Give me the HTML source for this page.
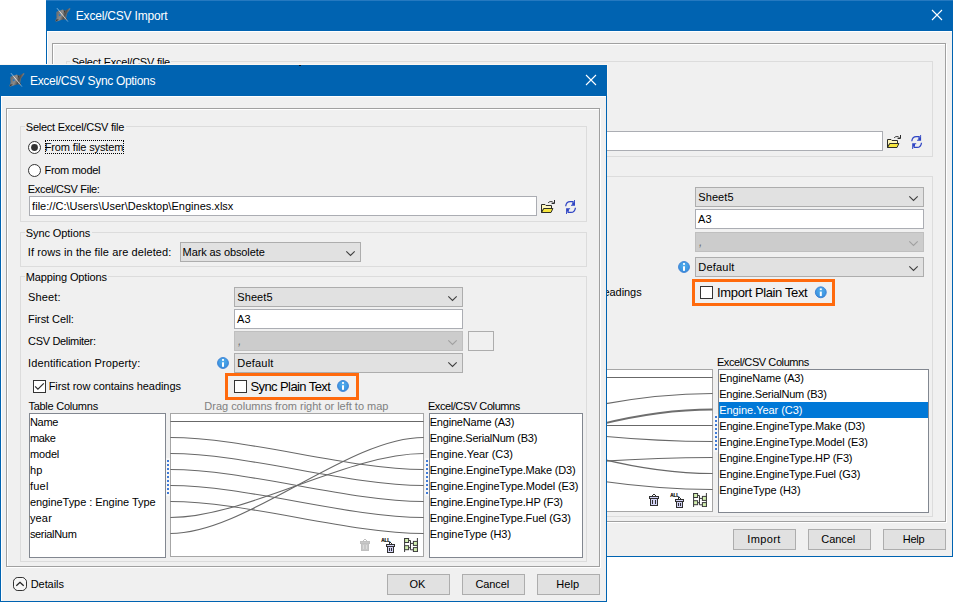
<!DOCTYPE html>
<html lang="en"><head><meta charset="utf-8"><title>Excel/CSV Sync Options</title>
<style>
html,body{margin:0;padding:0}
body{width:953px;height:602px;background:#fff;position:relative;overflow:hidden;font-family:"Liberation Sans", Arial, sans-serif;font-size:11px}
.a{position:absolute;display:block}
.t{white-space:nowrap}
</style></head>
<body>
<div class="a " style="left:46px;top:0px;width:907px;height:557px;background:#f0f0f0;"></div>
<div class="a " style="left:46px;top:0px;width:907px;height:31px;background:#0063B1;"></div>
<div class="a " style="left:46px;top:31px;width:1px;height:526px;background:#0063B1;"></div>
<div class="a " style="left:952px;top:31px;width:1px;height:526px;background:#0063B1;"></div>
<div class="a " style="left:46px;top:556px;width:907px;height:1px;background:#0063B1;"></div>
<div class="a " style="left:47px;top:31px;width:905px;height:1px;background:#fff;"></div>
<div class="a " style="left:47px;top:31px;width:1px;height:525px;background:#fff;"></div>
<svg class="a" style="left:55px;top:8px" width="16" height="15" viewBox="0 0 16 15"><defs><linearGradient id="gm1" x1="0" y1="0" x2="1" y2="0.35"><stop offset="0" stop-color="#b4b4b4"/><stop offset="0.22" stop-color="#6e6e6e"/><stop offset="0.5" stop-color="#8c8c8c"/><stop offset="0.72" stop-color="#4e4e4e"/><stop offset="1" stop-color="#a2a2a2"/></linearGradient><linearGradient id="gs1" x1="0" y1="0" x2="1" y2="1"><stop offset="0" stop-color="#fff" stop-opacity="0.55"/><stop offset="0.5" stop-color="#fff" stop-opacity="1"/><stop offset="1" stop-color="#fff" stop-opacity="0.45"/></linearGradient></defs><path d="M1.6 3.7 L7.6 1.4 L10.2 2.8 L14.6 0.1 L15.5 0.8 L12.2 5.3 L11.2 9.3 L11.9 12 L9.6 11.3 L6.2 12 L0.9 13.7 L0.3 12.6 L1.6 10 L1.3 6.6 Z" fill="url(#gm1)"/><path d="M8.4 1.9 L10.2 2.9 L9.8 5.2 Z M0.5 13.4 L4 11.8 L1.6 11.2 Z M11.3 9.4 L11.9 12 L10.2 11.4 Z" fill="#2e2e2e" opacity="0.85"/><rect x="3.9" y="6.2" width="1.7" height="1.9" fill="#2d78bd"/><path d="M1.9 0.1 L13 13.7" stroke="url(#gs1)" stroke-width="0.8"/></svg>
<div class="a " style="left:46px;top:0px;width:907px;height:1px;background:#2579c0;"></div>
<div class="a t" style="left:75.8px;top:9.34px;font-size:12px;line-height:15px;color:#fff;letter-spacing:-0.194px;">Excel/CSV Import</div>
<svg class="a" style="left:931px;top:9px" width="12" height="12" viewBox="0 0 12 12"><path d="M1 1 L11 11 M11 1 L1 11" stroke="#fff" stroke-width="1.1" fill="none"/></svg>
<div class="a " style="left:53px;top:44px;width:894px;height:479px;border:1px solid #ffffff;box-sizing:border-box;"></div>
<div class="a " style="left:52px;top:43px;width:894px;height:479px;border:1px solid #a0a0a0;box-sizing:border-box;"></div>
<div class="a " style="left:66px;top:61px;width:867px;height:96px;border:1px solid #dcdcdc;box-sizing:border-box;"></div>
<div class="a " style="left:70.4px;top:61px;width:101px;height:1px;background:#f0f0f0;"></div>
<div class="a t" style="left:71.7px;top:55.19px;font-size:11px;line-height:14px;color:#000;letter-spacing:-0.239px;">Select Excel/CSV file</div>
<div class="a " style="left:75px;top:131px;width:808px;height:20px;background:#fff;border:1px solid #abadb3;box-sizing:border-box;"></div>
<svg class="a" style="left:887px;top:135px" width="15" height="13" viewBox="0 0 15 13"><path d="M0.5 12.5 L0.5 4.5 L4 4.5 L5 5.5 L10.5 5.5 L10.5 8.5 L2.8 8.5 Z" fill="#fdf6bd" stroke="#2e2e28" stroke-width="1"/><path d="M0.5 12.5 L2.8 8.5 L11.9 8.5 L10 12.5 Z" fill="#f6e63e" stroke="#2e2e28" stroke-width="1"/><path d="M7.2 2.8 C8.6 1.1 11 1.1 12.7 2.9 M13.5 0 L13.5 3.5 L10.6 3.5" fill="none" stroke="#2a2a2a" stroke-width="1"/></svg>
<svg class="a" style="left:911px;top:135px" width="12" height="14" viewBox="0 0 12 14"><g transform="translate(0.1 0.0)"><path d="M0.7 6.3 C1 3.4 2.6 1.6 5.2 1.6 L8.6 1.6" fill="none" stroke="#2f45c4" stroke-width="1.25"/><path d="M10 0 L10 5.7 L6 5.7 L6 4.7 L7.2 4.7 L7.2 2.3 L9.1 2.3 L9.1 0 Z" fill="#2f45c4"/><g transform="rotate(180 5.55 7)"><path d="M0.7 6.3 C1 3.4 2.6 1.6 5.2 1.6 L8.6 1.6" fill="none" stroke="#2f45c4" stroke-width="1.25"/><path d="M10 0 L10 5.7 L6 5.7 L6 4.7 L7.2 4.7 L7.2 2.3 L9.1 2.3 L9.1 0 Z" fill="#2f45c4"/></g></g></svg>
<div class="a " style="left:66px;top:176px;width:867px;height:341px;border:1px solid #dcdcdc;box-sizing:border-box;"></div>
<div class="a " style="left:70.4px;top:176px;width:84px;height:1px;background:#f0f0f0;"></div>
<div class="a t" style="left:71.7px;top:170.19px;font-size:11px;line-height:14px;color:#000;letter-spacing:-0.125px;">Mapping Options</div>
<div class="a " style="left:695px;top:187px;width:229px;height:20px;background:#e1e1e1;border:1px solid #adadad;box-sizing:border-box;"></div>
<div class="a t" style="left:698.3px;top:190.19px;font-size:11px;line-height:14px;color:#000;letter-spacing:0.071px;">Sheet5</div>
<svg class="a" style="left:908px;top:195px" width="11" height="7" viewBox="0 0 11 7"><g transform="translate(0.5 0.6)"><path d="M0.8 0.7 L5 4.9 L9.2 0.7" fill="none" stroke="#404040" stroke-width="1.1"/></g></svg>
<div class="a " style="left:695px;top:209px;width:229px;height:20px;background:#fff;border:1px solid #abadb3;box-sizing:border-box;"></div>
<div class="a t" style="left:698.1px;top:212.19px;font-size:11px;line-height:14px;color:#000;letter-spacing:0.116px;">A3</div>
<div class="a " style="left:695px;top:232px;width:229px;height:20px;background:#cccccc;border:1px solid #bfbfbf;box-sizing:border-box;"></div>
<div class="a t" style="left:699px;top:234.54px;font-size:12px;line-height:15px;color:#6d6d6d;font-style:italic;">,</div>
<svg class="a" style="left:908px;top:240px" width="11" height="7" viewBox="0 0 11 7"><g transform="translate(0.5 0.6)"><path d="M0.8 0.7 L5 4.9 L9.2 0.7" fill="none" stroke="#a0a0a0" stroke-width="1.1"/></g></svg>
<div class="a " style="left:695px;top:257px;width:229px;height:20px;background:#e1e1e1;border:1px solid #adadad;box-sizing:border-box;"></div>
<div class="a t" style="left:698.3px;top:260.19px;font-size:11px;line-height:14px;color:#000;letter-spacing:0.206px;">Default</div>
<svg class="a" style="left:908px;top:265px" width="11" height="7" viewBox="0 0 11 7"><g transform="translate(0.5 0.6)"><path d="M0.8 0.7 L5 4.9 L9.2 0.7" fill="none" stroke="#404040" stroke-width="1.1"/></g></svg>
<svg class="a" style="left:677px;top:260px" width="14" height="14" viewBox="0 0 14 14"><g transform="translate(0.5 0.5)"><defs><radialGradient id="ig" cx="0.5" cy="0.35" r="0.65"><stop offset="0" stop-color="#52adec"/><stop offset="0.7" stop-color="#3f98e2"/><stop offset="1" stop-color="#3687da"/></radialGradient></defs><circle cx="6.5" cy="6.5" r="5.45" fill="url(#ig)" stroke="#3a7fd2" stroke-width="0.9"/><rect x="5.5" y="2.6" width="2" height="1.7" fill="#fff"/><rect x="5.5" y="5.8" width="2" height="4.5" fill="#fff"/></g></svg>
<div class="a" style="left:692px;top:279px;width:143px;height:27px;border:3px solid #ff6a0d;box-sizing:border-box;background:#f0f0f0"></div>
<div class="a " style="left:700px;top:286px;width:13px;height:13px;background:#fff;border:1px solid #333333;box-sizing:border-box;"></div>
<div class="a t" style="left:717.1px;top:284.50px;font-size:13px;line-height:16px;color:#000;letter-spacing:-0.376px;">Import Plain Text</div>
<svg class="a" style="left:814px;top:285px" width="14" height="14" viewBox="0 0 14 14"><g transform="translate(0.3 0.8)"><defs><radialGradient id="ig" cx="0.5" cy="0.35" r="0.65"><stop offset="0" stop-color="#52adec"/><stop offset="0.7" stop-color="#3f98e2"/><stop offset="1" stop-color="#3687da"/></radialGradient></defs><circle cx="6.5" cy="6.5" r="5.45" fill="url(#ig)" stroke="#3a7fd2" stroke-width="0.9"/><rect x="5.5" y="2.6" width="2" height="1.7" fill="#fff"/><rect x="5.5" y="5.8" width="2" height="4.5" fill="#fff"/></g></svg>
<div class="a t" style="left:509.3px;top:284.79px;font-size:11px;line-height:14px;color:#000;letter-spacing:-0.059px;">First row contains headings</div>
<div class="a t" style="left:716.9px;top:355.19px;font-size:11px;line-height:14px;color:#000;letter-spacing:-0.415px;">Excel/CSV Columns</div>
<div class="a " style="left:340px;top:369px;width:373px;height:143px;background:#fff;border:1px solid #a6a6a6;box-sizing:border-box;"></div>
<svg class="a" style="left:0;top:0" width="953" height="602" viewBox="0 0 953 602"><g fill="none" stroke="#686868" stroke-width="1.15"><path d="M340 377.5 L712.6 377.5"/><path d="M600 404.6 Q660 393.5 712.6 393.5"/><path d="M600 424.4 Q660 409.5 712.6 409.5" stroke="#6e6e6e" stroke-width="2"/><path d="M340 425.5 L712.6 425.5"/><path d="M600 436 Q660 441.5 712.6 441.5"/><path d="M600 461.4 Q660 457.5 712.6 457.5"/><path d="M600 458.6 Q660 473.5 712.6 473.5"/><path d="M600 481 Q660 489.5 712.6 489.5"/></g></svg>
<svg class="a" style="left:649px;top:493px" width="11" height="14" viewBox="0 0 11 14" shape-rendering="crispEdges"><rect x="4" y="1" width="2" height="1" fill="#303030"/><rect x="3" y="2" width="1" height="1" fill="#303030"/><rect x="6" y="2" width="1" height="1" fill="#303030"/><rect x="0" y="3" width="10" height="3" fill="#303030"/><rect x="1" y="4" width="8" height="1" fill="#d2d2f6"/><rect x="1" y="6" width="8" height="7" fill="#303030"/><rect x="2" y="6" width="6" height="6" fill="#d2d2f6"/><rect x="3" y="7" width="1" height="4" fill="#303030"/><rect x="6" y="7" width="1" height="4" fill="#303030"/></svg>
<svg class="a" style="left:669px;top:493px" width="15" height="15" viewBox="0 0 15 15"><text x="1.2" y="3.95" font-family="Liberation Sans, Arial, sans-serif" font-size="5.4" font-weight="bold" fill="#000" stroke="#000" stroke-width="0.2" textLength="9" lengthAdjust="spacingAndGlyphs">ALL</text><g shape-rendering="crispEdges"><rect x="9" y="4" width="1" height="1" fill="#303030"/><rect x="10" y="4" width="1" height="1" fill="#303030"/><rect x="9" y="5" width="1" height="1" fill="#303030"/><rect x="11" y="5" width="1" height="1" fill="#303030"/><rect x="6" y="6" width="9" height="3" fill="#303030"/><rect x="7" y="7" width="7" height="1" fill="#d2d2f6"/><rect x="7" y="9" width="7" height="6" fill="#303030"/><rect x="8" y="9" width="5" height="5" fill="#d2d2f6"/><rect x="9" y="10" width="1" height="3" fill="#303030"/><rect x="11" y="10" width="1" height="3" fill="#303030"/></g></svg>
<svg class="a" style="left:693px;top:493px" width="14" height="14" viewBox="0 0 14 14"><path d="M0.6 0 L0.6 14 M13.4 0 L13.4 14" stroke="#3a3a3a" stroke-width="1"/><path d="M4.5 2.5 L6.5 2.5 M4.5 9.7 L6.5 9.7 M6.5 2.5 L6.5 11.8 M6.5 5.4 L9.5 5.4 M6.5 11.8 L9.5 11.8" fill="none" stroke="#3a3a3a" stroke-width="1"/><rect x="0.6" y="0.5" width="4" height="4" fill="#d3f0b0" stroke="#3a3a3a" stroke-width="1"/><rect x="0.6" y="7.7" width="4" height="4" fill="#d3f0b0" stroke="#3a3a3a" stroke-width="1"/><rect x="9.4" y="3.4" width="4" height="4" fill="#d3f0b0" stroke="#3a3a3a" stroke-width="1"/><rect x="9.4" y="9.6" width="4" height="4" fill="#d3f0b0" stroke="#3a3a3a" stroke-width="1"/></svg>
<div class="a " style="left:714px;top:414px;width:4px;height:38px;background:#f8f8f8;"></div>
<div class="a" style="left:715px;top:416px;width:2px;height:34px;background:repeating-linear-gradient(to bottom,#3f7ad6 0,#3f7ad6 2px,transparent 2px,transparent 4px)"></div>
<div class="a " style="left:718px;top:369px;width:211px;height:144px;background:#fff;border:1px solid #828790;box-sizing:border-box;"></div>
<div class="a " style="left:719px;top:402px;width:209px;height:16px;background:#0078d7;"></div>
<div class="a t" style="left:719.2px;top:371.19px;font-size:11px;line-height:14px;color:#000;letter-spacing:-0.196px;">EngineName (A3)</div>
<div class="a t" style="left:719.2px;top:387.19px;font-size:11px;line-height:14px;color:#000;letter-spacing:-0.243px;">Engine.SerialNum (B3)</div>
<div class="a t" style="left:719.2px;top:403.19px;font-size:11px;line-height:14px;color:#fff;letter-spacing:-0.049px;">Engine.Year (C3)</div>
<div class="a t" style="left:719.2px;top:419.19px;font-size:11px;line-height:14px;color:#000;letter-spacing:-0.145px;">Engine.EngineType.Make (D3)</div>
<div class="a t" style="left:719.2px;top:435.19px;font-size:11px;line-height:14px;color:#000;letter-spacing:-0.131px;">Engine.EngineType.Model (E3)</div>
<div class="a t" style="left:719.2px;top:451.19px;font-size:11px;line-height:14px;color:#000;letter-spacing:-0.143px;">Engine.EngineType.HP (F3)</div>
<div class="a t" style="left:719.2px;top:467.19px;font-size:11px;line-height:14px;color:#000;letter-spacing:-0.142px;">Engine.EngineType.Fuel (G3)</div>
<div class="a t" style="left:719.2px;top:483.19px;font-size:11px;line-height:14px;color:#000;letter-spacing:-0.083px;">EngineType (H3)</div>
<div class="a " style="left:733px;top:529px;width:63px;height:21px;background:#e1e1e1;border:1px solid #adadad;box-sizing:border-box;"></div>
<div class="a t" style="left:747.2px;top:532.19px;font-size:11px;line-height:14px;color:#000;letter-spacing:0.385px;">Import</div>
<div class="a " style="left:808px;top:529px;width:63px;height:21px;background:#e1e1e1;border:1px solid #adadad;box-sizing:border-box;"></div>
<div class="a t" style="left:821.3px;top:532.19px;font-size:11px;line-height:14px;color:#000;letter-spacing:-0.058px;">Cancel</div>
<div class="a " style="left:883px;top:529px;width:63px;height:21px;background:#e1e1e1;border:1px solid #adadad;box-sizing:border-box;"></div>
<div class="a t" style="left:902.8px;top:532.19px;font-size:11px;line-height:14px;color:#000;letter-spacing:-0.281px;">Help</div>
<div class="a " style="left:0px;top:64px;width:608px;height:1px;background:#fbf7f2;"></div>
<div class="a " style="left:607px;top:64px;width:1px;height:32px;background:#fbf7f2;"></div>
<div class="a " style="left:0px;top:65px;width:607px;height:537px;background:#f0f0f0;"></div>
<div class="a " style="left:0px;top:65px;width:607px;height:31px;background:#0063B1;"></div>
<div class="a " style="left:0px;top:96px;width:1px;height:506px;background:#0063B1;"></div>
<div class="a " style="left:606px;top:96px;width:1px;height:506px;background:#0063B1;"></div>
<div class="a " style="left:0px;top:601px;width:607px;height:1px;background:#0063B1;"></div>
<div class="a " style="left:1px;top:96px;width:605px;height:1px;background:#fff;"></div>
<div class="a " style="left:1px;top:96px;width:1px;height:505px;background:#fff;"></div>
<svg class="a" style="left:9px;top:73px" width="16" height="15" viewBox="0 0 16 15"><defs><linearGradient id="gm2" x1="0" y1="0" x2="1" y2="0.35"><stop offset="0" stop-color="#b4b4b4"/><stop offset="0.22" stop-color="#6e6e6e"/><stop offset="0.5" stop-color="#8c8c8c"/><stop offset="0.72" stop-color="#4e4e4e"/><stop offset="1" stop-color="#a2a2a2"/></linearGradient><linearGradient id="gs2" x1="0" y1="0" x2="1" y2="1"><stop offset="0" stop-color="#fff" stop-opacity="0.55"/><stop offset="0.5" stop-color="#fff" stop-opacity="1"/><stop offset="1" stop-color="#fff" stop-opacity="0.45"/></linearGradient></defs><path d="M1.6 3.7 L7.6 1.4 L10.2 2.8 L14.6 0.1 L15.5 0.8 L12.2 5.3 L11.2 9.3 L11.9 12 L9.6 11.3 L6.2 12 L0.9 13.7 L0.3 12.6 L1.6 10 L1.3 6.6 Z" fill="url(#gm2)"/><path d="M8.4 1.9 L10.2 2.9 L9.8 5.2 Z M0.5 13.4 L4 11.8 L1.6 11.2 Z M11.3 9.4 L11.9 12 L10.2 11.4 Z" fill="#2e2e2e" opacity="0.85"/><rect x="3.9" y="6.2" width="1.7" height="1.9" fill="#2d78bd"/><path d="M1.9 0.1 L13 13.7" stroke="url(#gs2)" stroke-width="0.8"/></svg>
<div class="a " style="left:299px;top:65px;width:2px;height:1px;background:#0a1020;"></div>
<div class="a t" style="left:30.0px;top:74.34px;font-size:12px;line-height:15px;color:#fff;letter-spacing:-0.316px;">Excel/CSV Sync Options</div>
<svg class="a" style="left:585px;top:74px" width="12" height="12" viewBox="0 0 12 12"><path d="M1 1 L11 11 M11 1 L1 11" stroke="#fff" stroke-width="1.1" fill="none"/></svg>
<div class="a " style="left:7px;top:109px;width:594px;height:459px;border:1px solid #ffffff;box-sizing:border-box;"></div>
<div class="a " style="left:6px;top:108px;width:594px;height:459px;border:1px solid #a0a0a0;box-sizing:border-box;"></div>
<div class="a " style="left:20px;top:126px;width:567px;height:96px;border:1px solid #dcdcdc;box-sizing:border-box;"></div>
<div class="a " style="left:24.5px;top:126px;width:101px;height:1px;background:#f0f0f0;"></div>
<div class="a t" style="left:25.8px;top:120.19px;font-size:11px;line-height:14px;color:#000;letter-spacing:-0.239px;">Select Excel/CSV file</div>
<svg class="a" style="left:28px;top:141px" width="13" height="13" viewBox="0 0 13 13"><circle cx="6.5" cy="6.5" r="6" fill="#fff" stroke="#333" stroke-width="1"/><circle cx="6.5" cy="6.5" r="3.4" fill="#333"/></svg>
<div class="a t" style="left:44.7px;top:140.19px;font-size:11px;line-height:14px;color:#000;letter-spacing:-0.137px;">From file system</div>
<div class="a" style="left:45px;top:140px;width:79px;height:14px;border:1px dotted #000;box-sizing:border-box"></div>
<svg class="a" style="left:28px;top:164px" width="13" height="13" viewBox="0 0 13 13"><circle cx="6.5" cy="6.5" r="6" fill="#fff" stroke="#333" stroke-width="1"/></svg>
<div class="a t" style="left:44.5px;top:163.19px;font-size:11px;line-height:14px;color:#000;letter-spacing:-0.299px;">From model</div>
<div class="a t" style="left:27.8px;top:182.19px;font-size:11px;line-height:14px;color:#000;letter-spacing:-0.308px;">Excel/CSV File:</div>
<div class="a " style="left:29px;top:196px;width:508px;height:20px;background:#fff;border:1px solid #abadb3;box-sizing:border-box;"></div>
<div class="a t" style="left:32.1px;top:199.19px;font-size:11px;line-height:14px;color:#000;letter-spacing:0.019px;">file://C:\Users\User\Desktop\Engines.xlsx</div>
<svg class="a" style="left:541px;top:200px" width="15" height="13" viewBox="0 0 15 13"><path d="M0.5 12.5 L0.5 4.5 L4 4.5 L5 5.5 L10.5 5.5 L10.5 8.5 L2.8 8.5 Z" fill="#fdf6bd" stroke="#2e2e28" stroke-width="1"/><path d="M0.5 12.5 L2.8 8.5 L11.9 8.5 L10 12.5 Z" fill="#f6e63e" stroke="#2e2e28" stroke-width="1"/><path d="M7.2 2.8 C8.6 1.1 11 1.1 12.7 2.9 M13.5 0 L13.5 3.5 L10.6 3.5" fill="none" stroke="#2a2a2a" stroke-width="1"/></svg>
<svg class="a" style="left:565px;top:200px" width="11" height="14" viewBox="0 0 11 14"><path d="M0.7 6.3 C1 3.4 2.6 1.6 5.2 1.6 L8.6 1.6" fill="none" stroke="#2f45c4" stroke-width="1.25"/><path d="M10 0 L10 5.7 L6 5.7 L6 4.7 L7.2 4.7 L7.2 2.3 L9.1 2.3 L9.1 0 Z" fill="#2f45c4"/><g transform="rotate(180 5.55 7)"><path d="M0.7 6.3 C1 3.4 2.6 1.6 5.2 1.6 L8.6 1.6" fill="none" stroke="#2f45c4" stroke-width="1.25"/><path d="M10 0 L10 5.7 L6 5.7 L6 4.7 L7.2 4.7 L7.2 2.3 L9.1 2.3 L9.1 0 Z" fill="#2f45c4"/></g></svg>
<div class="a " style="left:20px;top:232px;width:567px;height:35px;border:1px solid #dcdcdc;box-sizing:border-box;"></div>
<div class="a " style="left:24.5px;top:232px;width:67px;height:1px;background:#f0f0f0;"></div>
<div class="a t" style="left:25.8px;top:226.19px;font-size:11px;line-height:14px;color:#000;letter-spacing:-0.093px;">Sync Options</div>
<div class="a t" style="left:27.8px;top:244.69px;font-size:11px;line-height:14px;color:#000;letter-spacing:0.092px;">If rows in the file are deleted:</div>
<div class="a " style="left:180px;top:242px;width:181px;height:20px;background:#e1e1e1;border:1px solid #adadad;box-sizing:border-box;"></div>
<div class="a t" style="left:182.60000000000002px;top:245.19px;font-size:11px;line-height:14px;color:#000;letter-spacing:-0.104px;">Mark as obsolete</div>
<svg class="a" style="left:345px;top:250px" width="11" height="7" viewBox="0 0 11 7"><g transform="translate(0.5 0.6)"><path d="M0.8 0.7 L5 4.9 L9.2 0.7" fill="none" stroke="#404040" stroke-width="1.1"/></g></svg>
<div class="a " style="left:20px;top:276px;width:567px;height:286px;border:1px solid #dcdcdc;box-sizing:border-box;"></div>
<div class="a " style="left:24.5px;top:276px;width:83.8px;height:1px;background:#f0f0f0;"></div>
<div class="a t" style="left:25.8px;top:270.19px;font-size:11px;line-height:14px;color:#000;letter-spacing:-0.138px;">Mapping Options</div>
<div class="a t" style="left:28.0px;top:290.19px;font-size:11px;line-height:14px;color:#000;letter-spacing:0.165px;">Sheet:</div>
<div class="a t" style="left:28.0px;top:312.19px;font-size:11px;line-height:14px;color:#000;letter-spacing:-0.059px;">First Cell:</div>
<div class="a t" style="left:28.0px;top:334.19px;font-size:11px;line-height:14px;color:#000;letter-spacing:-0.316px;">CSV Delimiter:</div>
<div class="a t" style="left:28.0px;top:356.19px;font-size:11px;line-height:14px;color:#000;letter-spacing:0.119px;">Identification Property:</div>
<div class="a " style="left:234px;top:287px;width:229px;height:20px;background:#e1e1e1;border:1px solid #adadad;box-sizing:border-box;"></div>
<div class="a t" style="left:237.3px;top:290.19px;font-size:11px;line-height:14px;color:#000;letter-spacing:0.071px;">Sheet5</div>
<svg class="a" style="left:447px;top:295px" width="11" height="7" viewBox="0 0 11 7"><g transform="translate(0.5 0.6)"><path d="M0.8 0.7 L5 4.9 L9.2 0.7" fill="none" stroke="#404040" stroke-width="1.1"/></g></svg>
<div class="a " style="left:234px;top:309px;width:229px;height:20px;background:#fff;border:1px solid #abadb3;box-sizing:border-box;"></div>
<div class="a t" style="left:237.1px;top:312.19px;font-size:11px;line-height:14px;color:#000;letter-spacing:0.116px;">A3</div>
<div class="a " style="left:234px;top:331px;width:229px;height:20px;background:#cccccc;border:1px solid #bfbfbf;box-sizing:border-box;"></div>
<div class="a t" style="left:238px;top:333.54px;font-size:12px;line-height:15px;color:#6d6d6d;font-style:italic;">,</div>
<svg class="a" style="left:447px;top:339px" width="11" height="7" viewBox="0 0 11 7"><g transform="translate(0.5 0.6)"><path d="M0.8 0.7 L5 4.9 L9.2 0.7" fill="none" stroke="#a0a0a0" stroke-width="1.1"/></g></svg>
<div class="a " style="left:234px;top:353px;width:229px;height:20px;background:#e1e1e1;border:1px solid #adadad;box-sizing:border-box;"></div>
<div class="a t" style="left:237.3px;top:356.19px;font-size:11px;line-height:14px;color:#000;letter-spacing:0.206px;">Default</div>
<svg class="a" style="left:447px;top:361px" width="11" height="7" viewBox="0 0 11 7"><g transform="translate(0.5 0.6)"><path d="M0.8 0.7 L5 4.9 L9.2 0.7" fill="none" stroke="#404040" stroke-width="1.1"/></g></svg>
<div class="a " style="left:468px;top:331px;width:26px;height:20px;background:#f0f0f0;border:1px solid #adadad;box-sizing:border-box;"></div>
<svg class="a" style="left:216px;top:356px" width="14" height="14" viewBox="0 0 14 14"><g transform="translate(0.5 0.5)"><defs><radialGradient id="ig" cx="0.5" cy="0.35" r="0.65"><stop offset="0" stop-color="#52adec"/><stop offset="0.7" stop-color="#3f98e2"/><stop offset="1" stop-color="#3687da"/></radialGradient></defs><circle cx="6.5" cy="6.5" r="5.45" fill="url(#ig)" stroke="#3a7fd2" stroke-width="0.9"/><rect x="5.5" y="2.6" width="2" height="1.7" fill="#fff"/><rect x="5.5" y="5.8" width="2" height="4.5" fill="#fff"/></g></svg>
<div class="a " style="left:33px;top:380px;width:13px;height:13px;background:#fff;border:1px solid #333333;box-sizing:border-box;"></div>
<svg class="a" style="left:33px;top:380px" width="13" height="13" viewBox="0 0 13 13"><path d="M2.1 6.4 L4.9 9.2 L10.8 3.3" fill="none" stroke="#2a2a2a" stroke-width="1.15"/></svg>
<div class="a t" style="left:48.7px;top:379.19px;font-size:11px;line-height:14px;color:#000;letter-spacing:-0.063px;">First row contains headings</div>
<div class="a" style="left:225px;top:373px;width:134px;height:27px;border:3px solid #ff6a0d;box-sizing:border-box;background:#f0f0f0"></div>
<div class="a " style="left:234px;top:380px;width:13px;height:13px;background:#fff;border:1px solid #333333;box-sizing:border-box;"></div>
<div class="a t" style="left:250.4px;top:378.50px;font-size:13px;line-height:16px;color:#000;letter-spacing:-0.583px;">Sync Plain Text</div>
<svg class="a" style="left:336px;top:379px" width="14" height="14" viewBox="0 0 14 14"><g transform="translate(0.5 0.5)"><defs><radialGradient id="ig" cx="0.5" cy="0.35" r="0.65"><stop offset="0" stop-color="#52adec"/><stop offset="0.7" stop-color="#3f98e2"/><stop offset="1" stop-color="#3687da"/></radialGradient></defs><circle cx="6.5" cy="6.5" r="5.45" fill="url(#ig)" stroke="#3a7fd2" stroke-width="0.9"/><rect x="5.5" y="2.6" width="2" height="1.7" fill="#fff"/><rect x="5.5" y="5.8" width="2" height="4.5" fill="#fff"/></g></svg>
<div class="a t" style="left:28.4px;top:399.19px;font-size:11px;line-height:14px;color:#000;letter-spacing:-0.251px;">Table Columns</div>
<div class="a t" style="left:204.3px;top:399.19px;font-size:11px;line-height:14px;color:#808080;letter-spacing:-0.014px;">Drag columns from right or left to map</div>
<div class="a t" style="left:427.9px;top:399.19px;font-size:11px;line-height:14px;color:#000;letter-spacing:-0.415px;">Excel/CSV Columns</div>
<div class="a " style="left:29px;top:413px;width:137px;height:145px;background:#fff;border:1px solid #828790;box-sizing:border-box;"></div>
<div class="a t" style="left:29.9px;top:415.19px;font-size:11px;line-height:14px;color:#000;letter-spacing:-0.261px;">Name</div>
<div class="a t" style="left:29.9px;top:431.19px;font-size:11px;line-height:14px;color:#000;letter-spacing:-0.277px;">make</div>
<div class="a t" style="left:29.9px;top:447.19px;font-size:11px;line-height:14px;color:#000;letter-spacing:-0.134px;">model</div>
<div class="a t" style="left:29.9px;top:463.19px;font-size:11px;line-height:14px;color:#000;letter-spacing:0.275px;">hp</div>
<div class="a t" style="left:29.9px;top:479.19px;font-size:11px;line-height:14px;color:#000;letter-spacing:0.237px;">fuel</div>
<div class="a t" style="left:29.9px;top:495.19px;font-size:11px;line-height:14px;color:#000;letter-spacing:-0.055px;">engineType : Engine Type</div>
<div class="a t" style="left:29.9px;top:511.19px;font-size:11px;line-height:14px;color:#000;letter-spacing:0.173px;">year</div>
<div class="a t" style="left:29.9px;top:527.19px;font-size:11px;line-height:14px;color:#000;letter-spacing:-0.324px;">serialNum</div>
<div class="a " style="left:170px;top:413px;width:254px;height:144px;background:#fff;border:1px solid #a6a6a6;box-sizing:border-box;"></div>
<svg class="a" style="left:0;top:0" width="953" height="602" viewBox="0 0 953 602"><g fill="none" stroke="#686868" stroke-width="1.15">
<path d="M170.4 421.5 C246.6 421.5 347.4 421.5 423.6 421.5"/>
<path d="M170.4 437.5 C246.6 437.5 347.4 469.5 423.6 469.5"/>
<path d="M170.4 453.5 C246.6 453.5 347.4 485.5 423.6 485.5"/>
<path d="M170.4 469.5 C246.6 469.5 347.4 501.5 423.6 501.5"/>
<path d="M170.4 485.5 C246.6 485.5 347.4 517.5 423.6 517.5"/>
<path d="M170.4 501.5 C246.6 501.5 347.4 533.5 423.6 533.5"/>
<path d="M170.4 517.5 C246.6 517.5 347.4 453.5 423.6 453.5"/>
<path d="M170.4 533.5 C246.6 533.5 347.4 437.5 423.6 437.5"/>
</g></svg>
<svg class="a" style="left:360px;top:538px" width="11" height="14" viewBox="0 0 11 14" shape-rendering="crispEdges"><rect x="4" y="1" width="2" height="1" fill="#c0c0c0"/><rect x="3" y="2" width="1" height="1" fill="#c0c0c0"/><rect x="6" y="2" width="1" height="1" fill="#c0c0c0"/><rect x="0" y="3" width="10" height="3" fill="#c0c0c0"/><rect x="1" y="4" width="8" height="1" fill="#c8c8c8"/><rect x="1" y="6" width="8" height="7" fill="#c0c0c0"/><rect x="2" y="6" width="6" height="6" fill="#c8c8c8"/><rect x="3" y="7" width="1" height="4" fill="#dcdcdc"/><rect x="6" y="7" width="1" height="4" fill="#dcdcdc"/></svg>
<svg class="a" style="left:380px;top:538px" width="15" height="15" viewBox="0 0 15 15"><text x="1.2" y="3.95" font-family="Liberation Sans, Arial, sans-serif" font-size="5.4" font-weight="bold" fill="#000" stroke="#000" stroke-width="0.2" textLength="9" lengthAdjust="spacingAndGlyphs">ALL</text><g shape-rendering="crispEdges"><rect x="9" y="4" width="1" height="1" fill="#303030"/><rect x="10" y="4" width="1" height="1" fill="#303030"/><rect x="9" y="5" width="1" height="1" fill="#303030"/><rect x="11" y="5" width="1" height="1" fill="#303030"/><rect x="6" y="6" width="9" height="3" fill="#303030"/><rect x="7" y="7" width="7" height="1" fill="#d2d2f6"/><rect x="7" y="9" width="7" height="6" fill="#303030"/><rect x="8" y="9" width="5" height="5" fill="#d2d2f6"/><rect x="9" y="10" width="1" height="3" fill="#303030"/><rect x="11" y="10" width="1" height="3" fill="#303030"/></g></svg>
<svg class="a" style="left:404px;top:538px" width="14" height="14" viewBox="0 0 14 14"><path d="M0.6 0 L0.6 14 M13.4 0 L13.4 14" stroke="#3a3a3a" stroke-width="1"/><path d="M4.5 2.5 L6.5 2.5 M4.5 9.7 L6.5 9.7 M6.5 2.5 L6.5 11.8 M6.5 5.4 L9.5 5.4 M6.5 11.8 L9.5 11.8" fill="none" stroke="#3a3a3a" stroke-width="1"/><rect x="0.6" y="0.5" width="4" height="4" fill="#d3f0b0" stroke="#3a3a3a" stroke-width="1"/><rect x="0.6" y="7.7" width="4" height="4" fill="#d3f0b0" stroke="#3a3a3a" stroke-width="1"/><rect x="9.4" y="3.4" width="4" height="4" fill="#d3f0b0" stroke="#3a3a3a" stroke-width="1"/><rect x="9.4" y="9.6" width="4" height="4" fill="#d3f0b0" stroke="#3a3a3a" stroke-width="1"/></svg>
<div class="a " style="left:166px;top:458px;width:4px;height:38px;background:#f8f8f8;"></div>
<div class="a" style="left:167px;top:460px;width:2px;height:34px;background:repeating-linear-gradient(to bottom,#3f7ad6 0,#3f7ad6 2px,transparent 2px,transparent 4px)"></div>
<div class="a " style="left:425px;top:458px;width:4px;height:38px;background:#f8f8f8;"></div>
<div class="a" style="left:426px;top:460px;width:2px;height:34px;background:repeating-linear-gradient(to bottom,#3f7ad6 0,#3f7ad6 2px,transparent 2px,transparent 4px)"></div>
<div class="a " style="left:429px;top:413px;width:154px;height:145px;background:#fff;border:1px solid #828790;box-sizing:border-box;"></div>
<div class="a t" style="left:429.7px;top:415.19px;font-size:11px;line-height:14px;color:#000;letter-spacing:-0.196px;">EngineName (A3)</div>
<div class="a t" style="left:429.7px;top:431.19px;font-size:11px;line-height:14px;color:#000;letter-spacing:-0.243px;">Engine.SerialNum (B3)</div>
<div class="a t" style="left:429.7px;top:447.19px;font-size:11px;line-height:14px;color:#000;letter-spacing:-0.049px;">Engine.Year (C3)</div>
<div class="a t" style="left:429.7px;top:463.19px;font-size:11px;line-height:14px;color:#000;letter-spacing:-0.145px;">Engine.EngineType.Make (D3)</div>
<div class="a t" style="left:429.7px;top:479.19px;font-size:11px;line-height:14px;color:#000;letter-spacing:-0.131px;">Engine.EngineType.Model (E3)</div>
<div class="a t" style="left:429.7px;top:495.19px;font-size:11px;line-height:14px;color:#000;letter-spacing:-0.143px;">Engine.EngineType.HP (F3)</div>
<div class="a t" style="left:429.7px;top:511.19px;font-size:11px;line-height:14px;color:#000;letter-spacing:-0.142px;">Engine.EngineType.Fuel (G3)</div>
<div class="a t" style="left:429.7px;top:527.19px;font-size:11px;line-height:14px;color:#000;letter-spacing:-0.083px;">EngineType (H3)</div>
<svg class="a" style="left:13px;top:577px" width="14" height="14" viewBox="0 0 14 14"><path d="M4.2 0.5 L9.8 0.5 Q11 0.7 12.2 2 Q13.3 3.2 13.5 4.2 L13.5 9.8 Q13.3 11 12.2 12.2 Q11 13.3 9.8 13.5 L4.2 13.5 Q3 13.3 1.8 12.2 Q0.7 11 0.5 9.8 L0.5 4.2 Q0.7 3 1.8 1.8 Q3 0.7 4.2 0.5 Z" fill="#f6f6f6" stroke="#333" stroke-width="1"/><path d="M3.3 8.7 L7 5.3 L10.7 8.7" fill="none" stroke="#222" stroke-width="1.3"/></svg>
<div class="a t" style="left:30.7px;top:577.19px;font-size:11px;line-height:14px;color:#000;letter-spacing:-0.061px;">Details</div>
<div class="a " style="left:387px;top:574px;width:63px;height:21px;background:#e1e1e1;border:1px solid #adadad;box-sizing:border-box;"></div>
<div class="a t" style="left:409.4px;top:577.19px;font-size:11px;line-height:14px;color:#000;letter-spacing:-0.053px;">OK</div>
<div class="a " style="left:462px;top:574px;width:63px;height:21px;background:#e1e1e1;border:1px solid #adadad;box-sizing:border-box;"></div>
<div class="a t" style="left:475.5px;top:577.19px;font-size:11px;line-height:14px;color:#000;letter-spacing:-0.125px;">Cancel</div>
<div class="a " style="left:537px;top:574px;width:63px;height:21px;background:#e1e1e1;border:1px solid #adadad;box-sizing:border-box;"></div>
<div class="a t" style="left:556.3px;top:577.19px;font-size:11px;line-height:14px;color:#000;letter-spacing:0.044px;">Help</div>
</body></html>
